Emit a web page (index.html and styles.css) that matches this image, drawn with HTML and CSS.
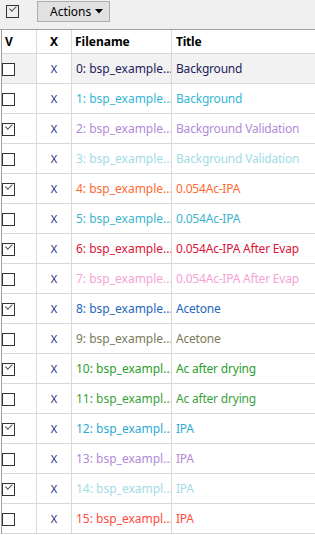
FILE: index.html
```html
<!DOCTYPE html>
<html lang="en">
<head>
  <meta charset="UTF-8">
  <title>Spectra list</title>
  <link rel="stylesheet" href="styles.css">
</head>
<body>
<div class="toolbar">
  <span class="check check-on check-top"></span>
  <button class="actions-button">Actions
    <svg class="arrow" width="8" height="5" viewBox="0 0 8 5"><polygon points="0,0 8,0 4,4.5" fill="#000"/></svg>
  </button>
</div>

<div class="grid">
  <div class="cell head">V</div>
  <div class="cell head cx">X</div>
  <div class="cell head">Filename</div>
  <div class="cell head title">Title</div>

  <div class="cell v current"><span class="check"></span></div>
  <div class="cell cx x">X</div>
  <div class="cell fn current c0">0: bsp_example...</div>
  <div class="cell title current c0">Background</div>

  <div class="cell v"><span class="check"></span></div>
  <div class="cell cx x">X</div>
  <div class="cell fn c1">1: bsp_example...</div>
  <div class="cell title c1">Background</div>

  <div class="cell v"><span class="check check-on"></span></div>
  <div class="cell cx x">X</div>
  <div class="cell fn c2">2: bsp_example...</div>
  <div class="cell title c2">Background Validation</div>

  <div class="cell v"><span class="check"></span></div>
  <div class="cell cx x">X</div>
  <div class="cell fn c3">3: bsp_example...</div>
  <div class="cell title c3">Background Validation</div>

  <div class="cell v"><span class="check check-on"></span></div>
  <div class="cell cx x">X</div>
  <div class="cell fn c4">4: bsp_example...</div>
  <div class="cell title c4">0.054Ac-IPA</div>

  <div class="cell v"><span class="check"></span></div>
  <div class="cell cx x">X</div>
  <div class="cell fn c5">5: bsp_example...</div>
  <div class="cell title c5">0.054Ac-IPA</div>

  <div class="cell v"><span class="check check-on"></span></div>
  <div class="cell cx x">X</div>
  <div class="cell fn c6">6: bsp_example...</div>
  <div class="cell title c6">0.054Ac-IPA After Evap</div>

  <div class="cell v"><span class="check"></span></div>
  <div class="cell cx x">X</div>
  <div class="cell fn c7">7: bsp_example...</div>
  <div class="cell title c7">0.054Ac-IPA After Evap</div>

  <div class="cell v"><span class="check check-on"></span></div>
  <div class="cell cx x">X</div>
  <div class="cell fn c8">8: bsp_example...</div>
  <div class="cell title c8">Acetone</div>

  <div class="cell v"><span class="check"></span></div>
  <div class="cell cx x">X</div>
  <div class="cell fn c9">9: bsp_example...</div>
  <div class="cell title c9">Acetone</div>

  <div class="cell v"><span class="check check-on"></span></div>
  <div class="cell cx x">X</div>
  <div class="cell fn c10">10: bsp_exampl...</div>
  <div class="cell title c10">Ac after drying</div>

  <div class="cell v"><span class="check"></span></div>
  <div class="cell cx x">X</div>
  <div class="cell fn c11">11: bsp_exampl...</div>
  <div class="cell title c11">Ac after drying</div>

  <div class="cell v"><span class="check check-on"></span></div>
  <div class="cell cx x">X</div>
  <div class="cell fn c12">12: bsp_exampl...</div>
  <div class="cell title c12">IPA</div>

  <div class="cell v"><span class="check"></span></div>
  <div class="cell cx x">X</div>
  <div class="cell fn c13">13: bsp_exampl...</div>
  <div class="cell title c13">IPA</div>

  <div class="cell v"><span class="check check-on"></span></div>
  <div class="cell cx x">X</div>
  <div class="cell fn c14">14: bsp_exampl...</div>
  <div class="cell title c14">IPA</div>

  <div class="cell v"><span class="check"></span></div>
  <div class="cell cx x">X</div>
  <div class="cell fn c15">15: bsp_exampl...</div>
  <div class="cell title c15">IPA</div>
</div>
</body>
</html>
```

FILE: styles.css
```css
body {
  margin: 0;
  width: 315px;
  background: #ffffff;
  font-family: "Noto Sans", "Open Sans", sans-serif;
  font-size: 12px;
  color: #000000;
  overflow: hidden;
}

.toolbar {
  height: 29px;
  background: #f0f0f0;
  border-bottom: 1px solid #a0a0a0;
  display: flex;
  align-items: flex-start;
}

.check {
  display: block;
  width: 11px;
  height: 11px;
  border: 1px solid #333333;
  background: #ffffff;
  position: relative;
}

.check-top {
  margin: 5px 0 0 6px;
  background: transparent;
}

.check-on::after {
  content: "";
  position: absolute;
  left: 2px;
  top: 1px;
  width: 6px;
  height: 3px;
  border-left: 1px solid #555555;
  border-bottom: 1px solid #555555;
  transform: translate(0, 2px) rotate(-45deg);
  transform-origin: left top;
}

.actions-button {
  margin: 1px 0 0 18px;
  width: 73px;
  height: 21px;
  padding: 0 6px 0 12px;
  background: #e1e1e1;
  border: 1px solid #adadad;
  font-family: inherit;
  font-size: 12px;
  color: #000000;
  display: flex;
  align-items: center;
  justify-content: space-between;
}

.arrow {
  display: block;
}

.grid {
  display: grid;
  grid-template-columns: 35px 35px 100px 1fr;
  margin-left: 1px;
  border-left: 1px solid #a0a0a0;
}

.cell {
  height: 29px;
  border-bottom: 1px solid #d9d9d9;
  border-right: 1px solid #d9d9d9;
  display: flex;
  align-items: center;
  white-space: nowrap;
  overflow: hidden;
  padding-left: 4px;
}

.head {
  height: 23px;
  font-weight: bold;
  padding-left: 3px;
}

.title {
  border-right: none;
  padding-left: 4px;
  letter-spacing: -0.2px;
}

.cx {
  justify-content: center;
  padding-left: 0;
}

.v {
  padding-left: 0;
  padding-top: 2px;
  box-sizing: border-box;
  height: 30px;
}

.x {
  font-size: 11px;
  color: #1c2a8c;
}

.current {
  background: #f2f2f2;
}

.c0 { color: #1c1c5c; }
.c1 { color: #33b6d6; }
.c2 { color: #b28ad8; }
.c3 { color: #a3dbe8; }
.c4 { color: #ff6a33; }
.c5 { color: #3cb4cc; }
.c6 { color: #dc1438; }
.c7 { color: #f5a2d6; }
.c8 { color: #2468bc; }
.c9 { color: #7a7a5a; }
.c10 { color: #2c9e2c; }
.c11 { color: #3aa23a; }
.c12 { color: #2eaad2; }
.c13 { color: #b28ad8; }
.c14 { color: #a3dbe8; }
.c15 { color: #ff4c3c; }
```
